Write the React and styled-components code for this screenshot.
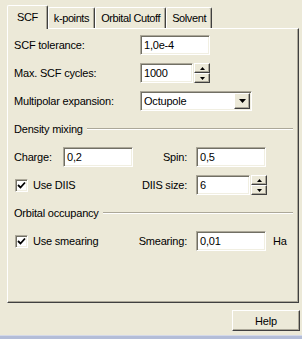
import React from 'react';
import styled, { createGlobalStyle, css } from 'styled-components';

const GlobalStyle = createGlobalStyle`
  html, body {
    margin: 0;
    padding: 0;
    background: #ece9d8;
  }
  body {
    font-family: 'Liberation Sans', Arial, sans-serif;
    font-size: 11px;
    color: #000;
  }
`;

const raised = css`
  border: 1px solid;
  border-color: #fff #404040 #404040 #fff;
  box-shadow: inset -1px -1px 0 #aca899;
`;

const sunken = css`
  border: 1px solid;
  border-color: #aca899 #fff #fff #aca899;
  box-shadow: inset 1px 1px 0 #716f64, inset -1px -1px 0 #f1efe2;
`;

const Window = styled.div`
  width: 302px;
  height: 339px;
  display: flex;
  flex-direction: column;
  background: #ece9d8;
  overflow: hidden;
  letter-spacing: -0.2px;
`;

const TabStrip = styled.div`
  height: 28px;
  flex: none;
  display: flex;
  align-items: flex-end;
  padding-left: 7px;
`;

const Tab = styled.div`
  position: relative;
  z-index: ${p => (p.$active ? 1 : 0)};
  box-sizing: border-box;
  height: ${p => (p.$active ? 24 : 21)}px;
  margin-bottom: ${p => (p.$active ? -1 : 0)}px;
  padding: 0 ${p => (p.$active ? 9 : 5)}px ${p => (p.$active ? 2 : 0)}px;
  display: flex;
  align-items: center;
  letter-spacing: -0.4px;
  background: #ece9d8;
  border-top: 1px solid #fff;
  border-left: 1px solid #fff;
  border-right: 1px solid #404040;
  border-radius: 2px 2px 0 0;
  box-shadow: inset -1px 0 0 #aca899;
`;

const Panel = styled.div`
  margin: 0 3px 0 7px;
  height: 275px;
  flex: none;
  box-sizing: border-box;
  ${raised};
  padding: 2px 5px 0 6px;
`;

const Row = styled.div`
  display: flex;
  align-items: center;
  height: 28px;
`;

const Label = styled.span`
  flex: none;
  box-sizing: border-box;
  width: ${p => p.$w}px;
  text-align: ${p => (p.$right ? 'right' : 'left')};
  padding-right: ${p => (p.$right ? 9 : 0)}px;
  white-space: nowrap;
`;

const Field = styled.div`
  ${sunken};
  box-sizing: border-box;
  flex: none;
  width: ${p => p.$w}px;
  height: 20px;
  background: #fff;
  padding: 0 2px 0 3px;
  display: flex;
  align-items: center;
  justify-content: space-between;
  white-space: nowrap;
`;

const Spin = styled.div`
  flex: none;
  display: flex;
  flex-direction: column;
  width: 16px;
  height: 20px;
  margin-left: 1px;
`;

const SpinButton = styled.div`
  ${raised};
  box-sizing: border-box;
  flex: 1;
  background: #ece9d8;
  display: flex;
  align-items: center;
  justify-content: center;
`;

const DropButton = styled.div`
  ${raised};
  box-sizing: border-box;
  width: 16px;
  height: 16px;
  margin-right: -1px;
  background: #ece9d8;
  display: flex;
  align-items: center;
  justify-content: center;
`;

const GroupHead = styled.div`
  display: flex;
  align-items: center;
  gap: 4px;
  height: 28px;

  &::after {
    content: '';
    flex: 1;
    border-top: 1px solid #aca899;
    border-bottom: 1px solid #fff;
  }
`;

const CheckLabel = styled.label`
  flex: none;
  width: 119px;
  display: flex;
  align-items: center;
  gap: 5px;
  padding-left: 1px;
  box-sizing: border-box;
`;

const Box = styled.span`
  ${sunken};
  box-sizing: border-box;
  width: 13px;
  height: 13px;
  background: #fff;
  display: flex;
  align-items: center;
  justify-content: center;
`;

const Unit = styled.span`
  margin-left: 7px;
`;

const Footer = styled.div`
  flex: 1;
  display: flex;
  justify-content: flex-end;
  align-items: flex-start;
  padding: 7px 2px 0 0;
`;

const Button = styled.div`
  ${raised};
  box-sizing: border-box;
  width: 68px;
  height: 21px;
  display: flex;
  align-items: center;
  justify-content: center;
`;

const Strip = styled.div`
  height: 3px;
  flex: none;
  background: #b3bdd8;
  border-top: 1px solid #d4d9e8;
`;

const Arrow = ({ down, w = 5 }) => (
  <svg width={w} height={(w + 1) / 2} viewBox={`0 0 ${w} ${(w + 1) / 2}`}>
    <polygon
      points={down ? `0,0 ${w},0 ${w / 2},${(w + 1) / 2}` : `0,${(w + 1) / 2} ${w},${(w + 1) / 2} ${w / 2},0`}
      fill="#000"
    />
  </svg>
);

const Spinner = () => (
  <Spin>
    <SpinButton><Arrow w={5} /></SpinButton>
    <SpinButton><Arrow w={5} down /></SpinButton>
  </Spin>
);

const Checkbox = ({ children }) => (
  <CheckLabel>
    <Box>
      <svg width="9" height="9" viewBox="0 0 9 9">
        <polyline points="1,4 3.5,6.5 8,1.5" fill="none" stroke="#000" strokeWidth="1.8" />
      </svg>
    </Box>
    {children}
  </CheckLabel>
);

export default function App() {
  return (
    <Window>
      <GlobalStyle />
      <TabStrip>
        <Tab $active>SCF</Tab>
        <Tab>k-points</Tab>
        <Tab>Orbital Cutoff</Tab>
        <Tab>Solvent</Tab>
      </TabStrip>

      <Panel>
        <Row>
          <Label $w={126}>SCF tolerance:</Label>
          <Field $w={70}>1,0e-4</Field>
        </Row>
        <Row>
          <Label $w={126}>Max. SCF cycles:</Label>
          <Field $w={53}>1000</Field>
          <Spinner />
        </Row>
        <Row>
          <Label $w={126}>Multipolar expansion:</Label>
          <Field $w={112}>
            Octupole
            <DropButton><Arrow w={7} down /></DropButton>
          </Field>
        </Row>

        <GroupHead>Density mixing</GroupHead>
        <Row>
          <Label $w={49}>Charge:</Label>
          <Field $w={70}>0,2</Field>
          <Label $w={63} $right>Spin:</Label>
          <Field $w={70}>0,5</Field>
        </Row>
        <Row>
          <Checkbox>Use DIIS</Checkbox>
          <Label $w={63} $right>DIIS size:</Label>
          <Field $w={54}>6</Field>
          <Spinner />
        </Row>

        <GroupHead>Orbital occupancy</GroupHead>
        <Row>
          <Checkbox>Use smearing</Checkbox>
          <Label $w={63} $right>Smearing:</Label>
          <Field $w={70}>0,01</Field>
          <Unit>Ha</Unit>
        </Row>
      </Panel>

      <Footer>
        <Button>Help</Button>
      </Footer>
      <Strip />
    </Window>
  );
}
